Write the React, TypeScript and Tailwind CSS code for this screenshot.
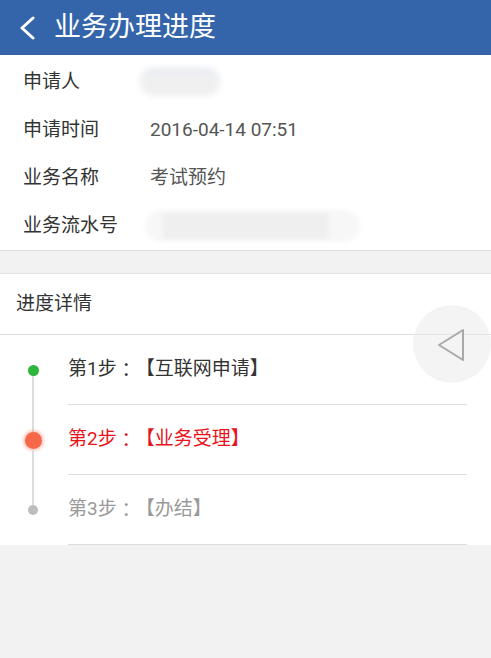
const FONT = { fontFamily: '"Roboto", "Noto Sans CJK SC", sans-serif' };

type Step = {
  no: number;
  name: string;
  state: "done" | "current" | "todo";
};

const STEPS: Step[] = [
  { no: 1, name: "互联网申请", state: "done" },
  { no: 2, name: "业务受理", state: "current" },
  { no: 3, name: "办结", state: "todo" },
];

const InfoRow = ({ label, children }: { label: string; children?: React.ReactNode }) => (
  <div className="flex h-12 items-center">
    <span className="w-[150px] shrink-0 pl-[23px] text-[19px] text-[#333]">{label}</span>
    <div className="flex items-center text-[19px] text-[#555]">{children}</div>
  </div>
);

const Dot = ({ state }: { state: Step["state"] }) => {
  if (state === "done") return <span className="block h-[11px] w-[11px] rounded-full bg-[#2db53c]" />;
  if (state === "current")
    return (
      <span className="block h-[17px] w-[17px] rounded-full bg-[#f7674a] shadow-[0_0_3px_2px_rgba(247,103,74,0.35)]" />
    );
  return <span className="block h-[10px] w-[10px] rounded-full bg-[#bdbdbd]" />;
};

export default function App() {
  return (
    <div className="relative min-h-[658px] bg-[#f2f2f2] [text-spacing-trim:space-all]" style={FONT}>
      <header className="flex h-[55px] items-center bg-[#3465aa]">
        <svg viewBox="0 0 20 24" className="ml-[17px] h-[24px] w-[20px]" fill="none" stroke="#fff" strokeWidth="3" strokeLinecap="round" strokeLinejoin="round">
          <path d="M16 2 5 12l11 10" />
        </svg>
        <h1 className="ml-[17px] text-[27px] leading-none text-white">业务办理进度</h1>
      </header>

      <section className="border-b border-[#dcdcdc] bg-white pt-[3px]">
        <InfoRow label="申请人">
          <div className="ml-[-10px] h-[27px] w-[80px] rounded-full bg-[#f0f0f0] blur-[3px] shadow-[inset_0_2px_2px_-1px_rgba(70,120,210,0.35)]" />
        </InfoRow>
        <InfoRow label="申请时间">2016-04-14 07:51</InfoRow>
        <InfoRow label="业务名称">考试预约</InfoRow>
        <InfoRow label="业务流水号">
          <div className="ml-[-5px] flex h-[32px] w-[215px] items-center rounded-full bg-[#f7f7f7] blur-[2px]">
            <div className="ml-[18px] h-[26px] w-[166px] bg-[#efefef]" />
          </div>
        </InfoRow>
      </section>

      <section className="mt-[22px] border-t border-[#e3e3e3] bg-white">
        <div className="flex h-[61px] items-center border-b border-[#dddddd] pl-4 text-[19px] text-[#333]">进度详情</div>
        {STEPS.map((s, i) => (
          <div key={s.no} className="flex h-[70px]">
            <div className="flex w-[68px] shrink-0 flex-col items-center pr-[2px]">
              <div className={`w-[2px] flex-1 ${i === 0 ? "bg-transparent" : "bg-[#dddddd]"}`} />
              <Dot state={s.state} />
              <div className={`w-[2px] flex-1 ${i === STEPS.length - 1 ? "bg-transparent" : "bg-[#dddddd]"}`} />
            </div>
            <div
              className={`mr-6 flex flex-1 items-center border-b border-[#dddddd] text-[19px] ${
                s.state === "done" ? "text-[#333]" : s.state === "current" ? "text-[#e8141a]" : "text-[#999]"
              }`}
            >
              第{s.no}步
              <span style={{ fontFamily: '"Noto Sans CJK JP", sans-serif' }}>：</span>
              【{s.name}】
            </div>
          </div>
        ))}
      </section>

      <button className="absolute left-[413px] top-[305px] h-[78px] w-[78px] rounded-full bg-[#ececec]/60">
        <svg viewBox="0 0 78 78" className="h-full w-full" fill="none" stroke="#a9a9a9" strokeWidth="2" strokeLinejoin="round">
          <path d="M50 25 26 40l24 15Z" />
        </svg>
      </button>
    </div>
  );
}
